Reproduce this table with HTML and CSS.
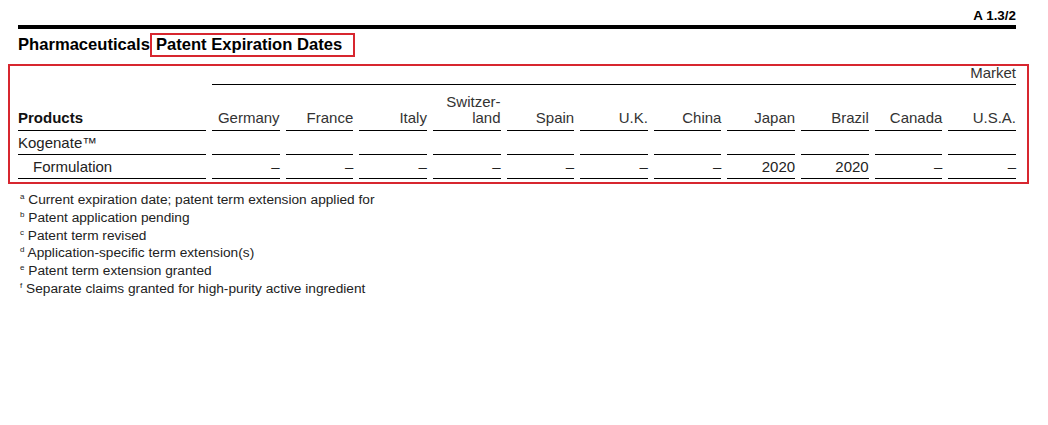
FILE: index.html
```html
<!DOCTYPE html>
<html lang="en">
<head>
<meta charset="utf-8">
<title>Pharmaceuticals Patent Expiration Dates</title>
<link rel="stylesheet" href="styles.css">
</head>
<body>
<div class="page">
  <div class="ref">A 1.3/2</div>
  <div class="bar"></div>
  <h1 class="title">Pharmaceuticals<span class="hl">Patent Expiration Dates</span></h1>
  <div class="box">
    <div class="grid">
      <div class="market">Market</div>

      <div class="cell head prod">Products</div>
      <div class="cell head num">Germany</div>
      <div class="cell head num">France</div>
      <div class="cell head num">Italy</div>
      <div class="cell head num">Switzer-<br>land</div>
      <div class="cell head num">Spain</div>
      <div class="cell head num">U.K.</div>
      <div class="cell head num">China</div>
      <div class="cell head num">Japan</div>
      <div class="cell head num">Brazil</div>
      <div class="cell head num">Canada</div>
      <div class="cell head num">U.S.A.</div>

      <div class="cell">Kogenate™</div>
      <div class="cell num"></div>
      <div class="cell num"></div>
      <div class="cell num"></div>
      <div class="cell num"></div>
      <div class="cell num"></div>
      <div class="cell num"></div>
      <div class="cell num"></div>
      <div class="cell num"></div>
      <div class="cell num"></div>
      <div class="cell num"></div>
      <div class="cell num"></div>

      <div class="cell sub">Formulation</div>
      <div class="cell num">–</div>
      <div class="cell num">–</div>
      <div class="cell num">–</div>
      <div class="cell num">–</div>
      <div class="cell num">–</div>
      <div class="cell num">–</div>
      <div class="cell num">–</div>
      <div class="cell num">2020</div>
      <div class="cell num">2020</div>
      <div class="cell num">–</div>
      <div class="cell num">–</div>
    </div>
  </div>
  <ul class="notes">
    <li><sup>a</sup> Current expiration date; patent term extension applied for</li>
    <li><sup>b</sup> Patent application pending</li>
    <li><sup>c</sup> Patent term revised</li>
    <li><sup>d</sup> Application-specific term extension(s)</li>
    <li><sup>e</sup> Patent term extension granted</li>
    <li><sup>f</sup> Separate claims granted for high-purity active ingredient</li>
  </ul>
</div>
</body>
</html>
```

FILE: styles.css
```css
html, body {
  margin: 0;
  padding: 0;
  background: #fff;
}

body {
  font-family: "Liberation Sans", Arial, Helvetica, sans-serif;
  color: #222;
}

.page {
  width: 998px;
  padding: 9px 32px 0 18px;
}

.ref {
  text-align: right;
  font-weight: bold;
  font-size: 13.4px;
  line-height: 14px;
  color: #000;
}

.bar {
  height: 4px;
  background: #000;
  margin-top: 2px;
}

.title {
  margin: 6px 0 0 0;
  height: 20px;
  font-size: 16.6px;
  line-height: 20px;
  font-weight: bold;
  color: #000;
  display: flex;
  align-items: center;
}

.hl {
  display: inline-block;
  border: 2px solid #d7262f;
  margin: -2px 0 -2px 0;
  padding: 0 11px 0 4px;
  line-height: 20px;
}

.box {
  margin: 9px -13px 0 -10px;
  padding: 0 11px 3px 8px;
  border: 2px solid #d7262f;
}

.grid {
  display: grid;
  grid-template-columns: 188px repeat(11, 1fr);
  column-gap: 6px;
  font-size: 15px;
  line-height: 16px;
}

.market {
  grid-column: 2 / -1;
  text-align: right;
  color: #333;
  line-height: 14px;
  padding-bottom: 4px;
  border-bottom: 1px solid #000;
}

.cell {
  border-bottom: 1px solid #000;
  padding: 4px 0 3px 0;
  min-height: 16px;
}

.head {
  padding: 9px 0 4px 0;
  display: flex;
  flex-direction: column;
  justify-content: flex-end;
  color: #333;
}

.head.prod {
  font-weight: bold;
  color: #111;
}

.num {
  text-align: right;
}

.head.num {
  align-items: flex-end;
}

.sub {
  padding-left: 15px;
}

.notes {
  list-style: none;
  margin: 7px 0 0 0;
  padding: 0 0 0 2px;
  font-size: 13.7px;
  line-height: 17.8px;
  color: #222;
}

.notes sup {
  font-size: 8px;
  line-height: 0;
  vertical-align: 5px;
}
```
